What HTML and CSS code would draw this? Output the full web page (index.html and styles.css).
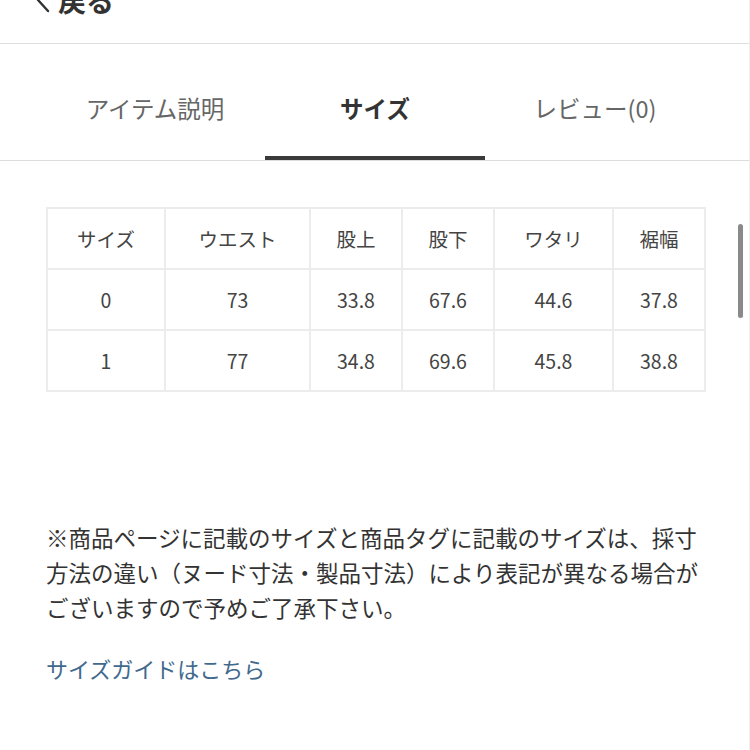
FILE: index.html
```html
<!DOCTYPE html>
<html lang="ja">
<head>
<meta charset="utf-8">
<link rel="stylesheet" href="styles.css">
</head>
<body>
<div class="page">
  <header class="header">
    <div class="back">
      <svg class="chev" width="14" height="26" viewBox="0 0 14 26"><polyline points="12,2 2,13 12,24" fill="none" stroke="#333" stroke-width="2.4" stroke-linecap="round" stroke-linejoin="round"/></svg>
      <span class="back-text">戻る</span>
    </div>
  </header>
  <nav class="tabs">
    <div class="tab">アイテム説明</div>
    <div class="tab active">サイズ</div>
    <div class="tab">レビュー(0)</div>
  </nav>
  <main class="content">
    <table class="size-table">
      <colgroup>
        <col style="width:118px"><col style="width:145px"><col style="width:92px"><col style="width:92px"><col style="width:119px"><col style="width:92px">
      </colgroup>
      <tr><td>サイズ</td><td>ウエスト</td><td>股上</td><td>股下</td><td>ワタリ</td><td>裾幅</td></tr>
      <tr><td>0</td><td>73</td><td>33.8</td><td>67.6</td><td>44.6</td><td>37.8</td></tr>
      <tr><td>1</td><td>77</td><td>34.8</td><td>69.6</td><td>45.8</td><td>38.8</td></tr>
    </table>
    <p class="note">※商品ページに記載のサイズと商品タグに記載のサイズは、採寸方法の違い（ヌード寸法・製品寸法）により表記が異なる場合がございますので予めご了承下さい。</p>
    <a class="guide" href="#">サイズガイドはこちら</a>
  </main>
  <div class="scrollbar"></div>
</div>
</body>
</html>
```

FILE: styles.css
```css
html, body {
  margin: 0;
  padding: 0;
  background: #fff;
}
body {
  font-family: "Noto Sans CJK JP", "Noto Sans", sans-serif;
  color: #333;
}
.page {
  position: relative;
  width: 750px;
  height: 750px;
  overflow: hidden;
  border-right: 1px solid #eee;
  box-sizing: border-box;
}
.header {
  height: 43px;
  border-bottom: 1px solid #dedede;
  overflow: hidden;
}
.back {
  display: flex;
  align-items: center;
  margin-top: -20px;
  padding-left: 36px;
  height: 40px;
}
.chev {
  margin-right: 8px;
}
.back-text {
  font-size: 28px;
  font-weight: 700;
  line-height: 40px;
  color: #333;
}
.tabs {
  display: flex;
  padding: 0 44px 0 45px;
  border-bottom: 1px solid #dcdcdc;
}
.tab {
  flex: 1;
  text-align: center;
  font-size: 23.5px;
  line-height: 32px;
  padding: 48px 0 32px;
  color: #666;
  border-bottom: 4px solid transparent;
}
.tab.active {
  color: #333;
  font-weight: 700;
  border-bottom-color: #3a3a3a;
}
.content {
  padding: 46px 46px 0 46px;
}
.size-table {
  border-collapse: collapse;
  table-layout: fixed;
  width: 658px;
}
.size-table td {
  border: 2px solid #ececec;
  height: 59px;
  padding: 0;
  text-align: center;
  font-size: 19.5px;
  color: #444;
}
.note {
  margin: 128px 0 0;
  font-size: 22.5px;
  line-height: 35px;
  color: #333;
}
.guide {
  display: block;
  margin-top: 26px;
  font-size: 22px;
  line-height: 35px;
  color: #41698d;
  text-decoration: none;
}
.scrollbar {
  position: absolute;
  left: 738px;
  top: 224px;
  width: 5px;
  height: 94px;
  border-radius: 3px;
  background: #8a8a8a;
}
```
